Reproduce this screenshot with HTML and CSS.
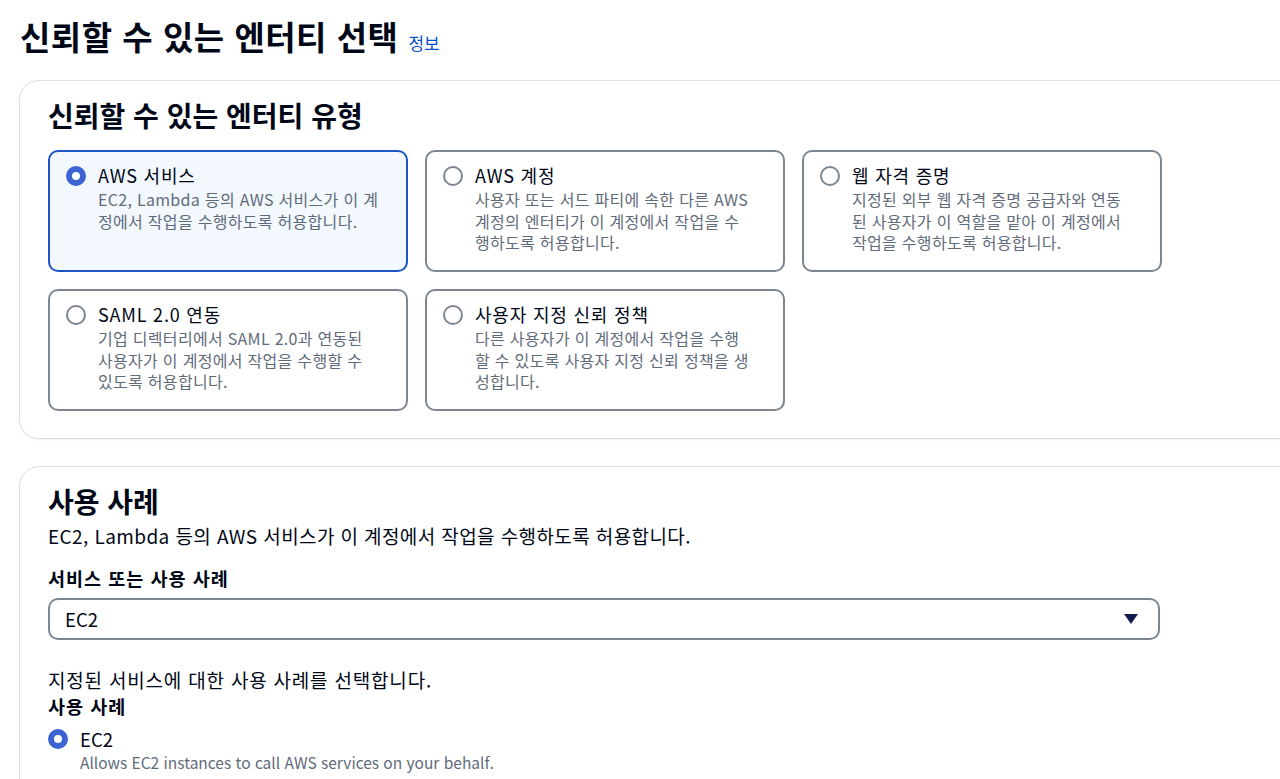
FILE: index.html
```html
<!DOCTYPE html>
<html lang="ko">
<head>
    <meta charset="UTF-8">
    <title>신뢰할 수 있는 엔터티 선택</title>
    <link rel="stylesheet" href="styles.css">
</head>
<body>
    <div class="page">
        <div class="page-header">
            <h1>신뢰할 수 있는 엔터티 선택</h1>
            <a class="info-link" href="#">정보</a>
        </div>

        <section class="container">
            <h2>신뢰할 수 있는 엔터티 유형</h2>
            <div class="tiles">
                <label class="tile selected">
                    <span class="radio checked"></span>
                    <span class="tile-body">
                        <span class="tile-title">AWS 서비스</span>
                        <span class="tile-desc">EC2, Lambda 등의 AWS 서비스가 이 계<br>정에서 작업을 수행하도록 허용합니다.</span>
                    </span>
                </label>
                <label class="tile">
                    <span class="radio"></span>
                    <span class="tile-body">
                        <span class="tile-title">AWS 계정</span>
                        <span class="tile-desc">사용자 또는 서드 파티에 속한 다른 AWS<br>계정의 엔터티가 이 계정에서 작업을 수<br>행하도록 허용합니다.</span>
                    </span>
                </label>
                <label class="tile">
                    <span class="radio"></span>
                    <span class="tile-body">
                        <span class="tile-title">웹 자격 증명</span>
                        <span class="tile-desc">지정된 외부 웹 자격 증명 공급자와 연동<br>된 사용자가 이 역할을 맡아 이 계정에서<br>작업을 수행하도록 허용합니다.</span>
                    </span>
                </label>
                <label class="tile">
                    <span class="radio"></span>
                    <span class="tile-body">
                        <span class="tile-title">SAML 2.0 연동</span>
                        <span class="tile-desc">기업 디렉터리에서 SAML 2.0과 연동된<br>사용자가 이 계정에서 작업을 수행할 수<br>있도록 허용합니다.</span>
                    </span>
                </label>
                <label class="tile">
                    <span class="radio"></span>
                    <span class="tile-body">
                        <span class="tile-title">사용자 지정 신뢰 정책</span>
                        <span class="tile-desc">다른 사용자가 이 계정에서 작업을 수행<br>할 수 있도록 사용자 지정 신뢰 정책을 생<br>성합니다.</span>
                    </span>
                </label>
            </div>
        </section>

        <section class="container">
            <h2>사용 사례</h2>
            <p class="section-desc">EC2, Lambda 등의 AWS 서비스가 이 계정에서 작업을 수행하도록 허용합니다.</p>

            <div class="field-label">서비스 또는 사용 사례</div>
            <div class="select">
                <span>EC2</span>
                <svg class="caret" width="14" height="10" viewBox="0 0 14 10"><path d="M0 0h14L7 10z" fill="#0f1b4c"/></svg>
            </div>

            <p class="field-desc">지정된 서비스에 대한 사용 사례를 선택합니다.</p>
            <div class="field-label tight">사용 사례</div>
            <label class="option">
                <span class="radio checked"></span>
                <span class="tile-body">
                    <span class="option-title">EC2</span>
                    <span class="option-desc">Allows EC2 instances to call AWS services on your behalf.</span>
                </span>
            </label>
        </section>
    </div>
</body>
</html>
```

FILE: styles.css
```css
html, body {
    margin: 0;
    padding: 0;
    background: #fff;
    overflow: hidden;
    font-family: "Noto Sans CJK KR", "Noto Sans", sans-serif;
    color: #000716;
}
.page {
    padding: 16px 0 0 19px;
}
.page-header {
    display: flex;
    align-items: baseline;
    gap: 10px;
    padding-left: 1px;
    height: 48px;
}
h1 {
    margin: 0;
    font-size: 33px;
    line-height: 40px;
    font-weight: 700;
    letter-spacing: 0.5px;
}
.info-link {
    color: #0b4fc8;
    font-size: 17px;
    text-decoration: none;
}
.container {
    border: 1px solid #dcdfe3;
    border-radius: 20px;
    margin-top: 16px;
    margin-right: -60px;
    padding: 18px 28px 27px 28px;
    box-shadow: 0 1px 2px #0000000d;
}
.container + .container {
    margin-top: 27px;
}
h2 {
    margin: 0;
    font-size: 28px;
    line-height: 32px;
    font-weight: 700;
}
.tiles {
    display: grid;
    grid-template-columns: repeat(3, 360px);
    grid-auto-rows: 122px;
    gap: 17px;
    margin-top: 19px;
}
.tile {
    display: flex;
    gap: 12px;
    box-sizing: border-box;
    border: 2px solid #7d8590;
    border-radius: 10px;
    padding: 11px 16px;
    cursor: pointer;
}
.tile.selected {
    border-color: #1f56c7;
    background: #f2f8fd;
}
.radio {
    flex: none;
    box-sizing: border-box;
    width: 20px;
    height: 20px;
    margin-top: 3px;
    border: 2px solid #7d8590;
    border-radius: 50%;
    background: #fff;
}
.radio.checked {
    border: 6px solid #3b63d3;
}
.tile-body {
    display: flex;
    flex-direction: column;
}
.tile-title {
    font-size: 18px;
    line-height: 24px;
    letter-spacing: 0.8px;
}
.tile-desc {
    margin-top: 2px;
    font-size: 16px;
    line-height: 21.5px;
    letter-spacing: 0.3px;
    white-space: nowrap;
    color: #5f6b7a;
}
.section-desc {
    margin: 7px 0 0;
    font-size: 19px;
    line-height: 24px;
    letter-spacing: 0.4px;
}
.field-label {
    margin-top: 18px;
    font-size: 18.5px;
    line-height: 24px;
    font-weight: 700;
    letter-spacing: 1px;
}
.field-label.tight {
    margin-top: 2px;
}
.select {
    display: flex;
    align-items: center;
    justify-content: space-between;
    box-sizing: border-box;
    width: 1112px;
    height: 42px;
    margin-top: 8px;
    padding: 0 20px 0 15px;
    border: 2px solid #7d8590;
    border-radius: 10px;
    font-size: 18.5px;
}
.field-desc {
    margin: 28px 0 0;
    font-size: 19px;
    line-height: 24px;
    letter-spacing: 0.8px;
}
.option {
    display: flex;
    gap: 12px;
    margin-top: 10px;
}
.option .radio {
    margin-top: 1px;
}
.option-title {
    font-size: 18.5px;
    line-height: 22px;
}
.option-desc {
    margin-top: 2px;
    font-size: 15.5px;
    line-height: 21px;
    color: #5f6b7a;
}
```
